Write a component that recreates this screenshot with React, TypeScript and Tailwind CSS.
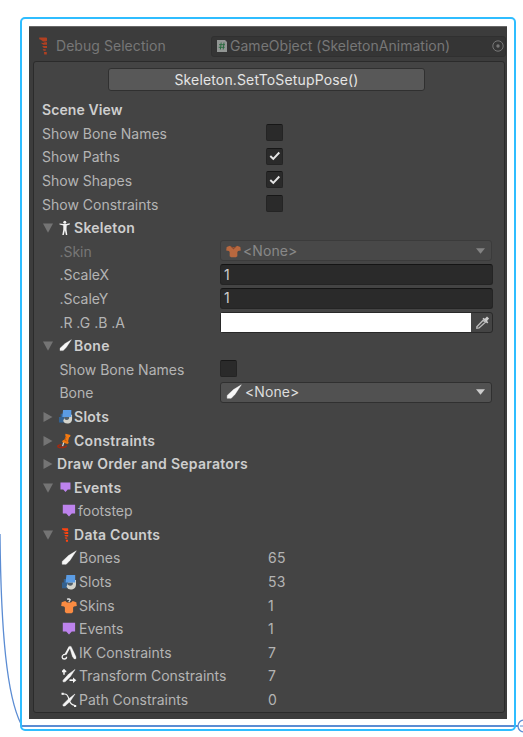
import React from "react";

type IconName =
  | "skeleton" | "bone" | "slot" | "pin" | "event" | "spine" | "skin" | "shirt" | "ik" | "transform" | "path";

function Icon({ name, className = "h-4 w-4" }: { name: IconName; className?: string }) {
  return (
    <svg viewBox="0 0 16 16" className={`shrink-0 ${className}`} aria-hidden="true">
      {name === "skeleton" && (
        <g fill="#f2f2f2">
          <circle cx="7.8" cy="2.2" r="1.5" />
          <path d="M2.500 3.500 6.500 4h2.600l3.700-.7v1.100L9.700 5.400l-.2 3.800.8 5.800H8.900L7.900 10.200 6.800 15H5.300l1-5.500V5.400l-3.800-.8Z" />
        </g>
      )}
      {name === "bone" && (
        <path d="M15.300.8 7.500 5.600 1.200 11.400v2.900h4l3.900-4.100Z" fill="#f7f7f7" stroke="#f7f7f7" strokeWidth=".4" strokeLinejoin="round" />
      )}
      {name === "slot" && (
        <g>
          <path d="M2.800 5H8v9.300H1V8.500h1.800Z" fill="#34618f" />
          <path d="M8 6h7v4.500a5 5 0 0 1-9.500 2.200Z" fill="#d4d4cc" />
          <path d="M6.500 8.500H12c0 2.300-1 3.200-2.700 3.200-1.800 0-2.800-1.100-2.800-3.200Z" fill="#52606b" />
          <path d="M5.400 1h8.800v7.600h-9.600Z" fill="#5b9ce4" />
        </g>
      )}
      {name === "pin" && (
        <g>
          <path d="M4.500 11.800c-5 .2-4.500 2.700-.5 2.700 3.500 0 5.700-.8 5.300-1.900" fill="none" stroke="#a12a12" strokeWidth="1.500" />
          <path d="m7 8.500-1.400 4.700" stroke="#ddd" strokeWidth="1.200" />
          <path d="m8.600.7 4.900 1.200-.5 2-.9.4-1 4 .7 1.600-1.500 1L5 9l.9-1.700 1.500-.6 1.400-3.600-.7-.8Z" fill="#f27a12" />
          <path d="m9.200 3.800-1.300 3.500 2.300.8" stroke="#c45307" strokeWidth=".8" fill="none" />
        </g>
      )}
      {name === "event" && <path d="M1.800 1.700h12.300v8.800h-3.300L8 13.500l-2.800-3H1.800Z" fill="#bd83ed" />}
      {name === "spine" && (
        <path d="M1 1.200h5.700l.5.6v1.900l-.7.600H4L2.200 3 1 2.600ZM2.200 5.300l2 .2L5.300 5h1.900v1.900H4.200ZM3.300 8h3.900v1.500H4.600ZM3.700 10.500h2.500v1.300H4.500ZM4.800 12.800H7v1.900H5Z" fill="#ff4310" />
      )}
      {(name === "skin" || name === "shirt") && (
        <g>
          <path d="m4.300 3 1.700 1.500h4L11.700 3l3.600 1.300.5 3.700-2.900.4-.8 1.100V14l-1.500 1.200H5.400L3.900 14V9.500l-.8-1.100L.2 8l.5-3.700Z" fill={name === "shirt" ? "#b8683f" : "#fa8b42"} />
          {name === "skin" && <path d="M6 1.200 8 .8l1.200.7-.3 1L7.700 4" fill="none" stroke="#eee" strokeWidth="1.200" />}
          {name === "shirt" && <path d="M4.500 3.200 8 7l3.500-3.800-1.800.7L8 5l-1.700-1.100Z" fill="#87482d" />}
        </g>
      )}
      {name === "ik" && (
        <g fill="none" stroke="#f5f5f5">
          <path d="M8.600 2 4.500 9.500" strokeWidth="1.900" />
          <path d="m8.300 1.200 1.800.2 4.900 10.400v2l-1.800.2-1.800-2.500Z" fill="#f5f5f5" strokeWidth=".3" />
          <path d="M4.700 9.300 2.500 9.700C.3 11 .9 14 3.200 14c1.600 0 2.400-.8 2.400-2.200" strokeWidth="1.300" />
        </g>
      )}
      {name === "transform" && (
        <g stroke="#f5f5f5" fill="#f5f5f5">
          <path d="M14 1.500 7.500 6.300 2 12.300v1.500h2L9.200 8.800Z" strokeWidth=".5" />
          <path d="M3 2v4.700M1 3.400h4.300" strokeWidth="1.500" />
          <path d="m1 3 2-2.200L5 3Z" stroke="none" />
          <path d="M8.500 12.200h5" strokeWidth="1.600" />
          <path d="m12 9.500 3.300 2.700-3.300 2.700Z" stroke="none" />
        </g>
      )}
      {name === "path" && (
        <g stroke="#f5f5f5" fill="none">
          <path d="M14 2 7.500 7 2 12.500V14h2L9.200 9.200Z" fill="#f5f5f5" strokeWidth=".5" />
          <path d="M1 2h2.500c4 0 3.800 4 5 7 .7 2 2 3.800 5.500 4.500" strokeWidth="1.200" />
          <path d="M.5 1.700h2.200M13 14h2.200" strokeWidth="1.900" />
        </g>
      )}
    </svg>
  );
}

function Row({ children, className = "" }: { children: React.ReactNode; className?: string }) {
  return <div className={`flex h-[23.6px] items-center whitespace-nowrap ${className}`}>{children}</div>;
}

function Checkbox({ checked = false }: { checked?: boolean }) {
  return (
    <span className="mb-[2px] flex h-[17px] w-[17px] items-center justify-center rounded-[2px] border border-[#242424] border-t-[#171717] bg-[#2a2a2a]">
      {checked && (
        <svg viewBox="0 0 12 12" className="h-3 w-3"><path d="m1.300 6 3 3 6-6.500" fill="none" stroke="#e5e5e5" strokeWidth="1.900" /></svg>
      )}
    </span>
  );
}

function SceneToggle({ label, checked }: { label: string; checked?: boolean }) {
  return <Row className="pl-2"><span className="w-[224px]">{label}</span><Checkbox checked={checked} /></Row>;
}

function Foldout({ label, icon, open = false, iconClass }: { label: string; icon?: IconName; open?: boolean; iconClass?: string }) {
  return (
    <Row className="pl-[9px] font-semibold tracking-[0.27px] text-[#cecece]">
      <svg viewBox="0 0 10 10" className="mr-[4px] h-[10px] w-[10px] shrink-0">
        <path d={open ? "M0 .5h10L5 9.800Z" : "M.5 0v10l9-5Z"} fill="#747474" />
      </svg>
      {icon && <span className="mr-[1px] flex w-4 items-center"><Icon name={icon} className={iconClass} /></span>}
      <span>{label}</span>
    </Row>
  );
}

function Property({ label, dim = false, children }: { label: string; dim?: boolean; children: React.ReactNode }) {
  return (
    <Row className="pl-[25.4px]">
      <span className={`w-[160.6px] shrink-0 ${dim ? "text-[#777777]" : ""}`}>{label}</span>
      {children}
    </Row>
  );
}

function Select({ icon, dim = false }: { icon: IconName; dim?: boolean }) {
  return (
    <div className={`mb-[2px] flex h-[21px] w-[272px] items-center rounded-[3px] border pl-[5px] pr-[6px] ${dim ? "border-[#3b3b3b] bg-[#484848] text-[#888888]" : "border-[#303030] bg-[#515151] text-[#dddddd]"}`}>
      <Icon name={icon} className={dim ? "mr-[2px] h-[15px] w-[15px]" : "mr-[3px] h-4 w-4"} />
      <span className="tracking-[0.1px]">&lt;None&gt;</span>
      <svg viewBox="0 0 10 6" className="ml-auto h-[6px] w-[9px]"><path d="M0 0h10L5 6Z" fill={dim ? "#838383" : "#cccccc"} /></svg>
    </div>
  );
}

function NumberField() {
  return <div className="mb-px flex h-[21px] w-[273px] items-center rounded-[3px] border border-[#242424] border-t-[#141414] bg-[#2a2a2a] pl-[3px] text-[#cfcfcf]">1</div>;
}

const counts: { icon: IconName; label: string; value: number }[] = [
  { icon: "bone", label: "Bones", value: 65 },
  { icon: "slot", label: "Slots", value: 53 },
  { icon: "skin", label: "Skins", value: 1 },
  { icon: "event", label: "Events", value: 1 },
  { icon: "ik", label: "IK Constraints", value: 7 },
  { icon: "transform", label: "Transform Constraints", value: 7 },
  { icon: "path", label: "Path Constraints", value: 0 },
];

export default function App() {
  return (
    <main className="relative h-[737px] w-[523px] overflow-hidden bg-white pl-5 pt-[17px] font-['Inter',sans-serif] text-[14px] leading-5 tracking-[0.001px] text-[#b4b4b4]">
      <svg viewBox="0 0 523 737" className="absolute inset-0 h-[737px] w-[523px]" fill="none" stroke="#5b8cd3">
        <path d="M0 534C1 634 7 696 21 724" strokeWidth="1.300" />
        <path d="M21 726h497" strokeWidth="2" />
        <circle cx="524" cy="726" r="6" strokeWidth="1.300" />
        <path d="M520 726h3" />
      </svg>
      <div className="relative h-[714px] w-[496px] rounded-[5px] border-2 border-[#2fbdff] pl-[7px] pt-[7px]">
        <section className="h-[693px] w-[478px] border-t border-[#686868] bg-[#3c3c3c]">
          <header className="flex h-[34px] items-center pl-[9px] pt-[4px] text-[#777777]">
            <Icon name="spine" className="mr-[-2px] h-5 w-5 opacity-60" />
            <span className="w-[155px] tracking-[0.05px]">Debug Selection</span>
            <div className="flex h-[21px] w-[295px] items-center rounded-[3px] border border-[#303030] bg-[#353535] pl-[5px]">
              <svg viewBox="0 0 10 12" className="mr-[3px] h-3 w-[10px]">
                <path d="M0 0h8l2 2v10H0Z" fill="#929694" />
                <path d="m4.200 2.500-.8 7M7 2.500l-.8 7M2 4.700h6M1.700 7.300h6" stroke="#24683a" strokeWidth=".9" />
              </svg>
              <span className="tracking-[0.02px]">GameObject (SkeletonAnimation)</span>
              <svg viewBox="0 0 12 12" className="ml-auto mr-px h-3 w-3"><circle cx="6" cy="6" r="5.200" fill="none" stroke="#777777" /><circle cx="6" cy="6" r="1.700" fill="#777777" /></svg>
            </div>
          </header>
          <div className="ml-1 h-[652px] w-[472px] rounded-[3px] border border-[#2b2b2b] bg-[#444444] pt-[6px]">
            <button className="ml-[74px] block h-[23px] w-[317px] rounded-[3px] border border-[#303030] bg-[#585858] leading-[22px] tracking-[0.15px] text-[#e5e5e5]">Skeleton.SetToSetupPose()</button>
            <div className="pt-[7.4px]">
              <Row className="pl-2 font-semibold tracking-[0.1px] text-[#cecece]">Scene View</Row>
              <SceneToggle label="Show Bone Names" />
              <SceneToggle label="Show Paths" checked />
              <SceneToggle label="Show Shapes" checked />
              <SceneToggle label="Show Constraints" />
              <Foldout label="Skeleton" icon="skeleton" open />
              <Property label=".Skin" dim><Select icon="shirt" dim /></Property>
              <Property label=".ScaleX"><NumberField /></Property>
              <Property label=".ScaleY"><NumberField /></Property>
              <Property label=".R .G .B .A">
                <div className="mb-px flex h-[21px] w-[273px] rounded-[3px] border border-[#292929] bg-[#444444]">
                  <div className="h-[19px] w-[250px] bg-white" />
                  <svg viewBox="0 0 16 16" className="ml-1 mt-[2px] h-[15px] w-[15px]" fill="none">
                    <path d="m2 12.500 6.700-7 2.300 2.300-6.700 6L2 14Z" stroke="#b9b9b9" strokeWidth="1.500" />
                    <path d="m8 4 5 5 1.200-1.200-1.400-1.500L15 3.700 12.800 1.600 10.500 4 9.200 2.800Z" fill="#cccccc" />
                  </svg>
                </div>
              </Property>
              <Foldout label="Bone" icon="bone" open iconClass="ml-[2px] mb-[2px] h-[13px] w-[13px]" />
              <Property label="Show Bone Names"><Checkbox /></Property>
              <Property label="Bone"><Select icon="bone" /></Property>
              <Foldout label="Slots" icon="slot" iconClass="ml-px h-[15px] w-[15px]" />
              <Foldout label="Constraints" icon="pin" />
              <Foldout label="Draw Order and Separators" />
              <Foldout label="Events" icon="event" open iconClass="ml-[2px] h-[13px] w-[13px]" />
              <Row className="pl-[27px]"><Icon name="event" className="mr-px h-4 w-4" /><span>footstep</span></Row>
              <Foldout label="Data Counts" icon="spine" open iconClass="ml-[4px] h-4 w-4" />
              {counts.map(({ icon, label, value }) => (
                <Row key={label} className="pl-[27px]">
                  <Icon name={icon} className="mr-[2px] h-4 w-4" /><span className="w-[189px]">{label}</span><span className="tracking-[0.2px]">{value}</span>
                </Row>
              ))}
            </div>
          </div>
        </section>
      </div>
    </main>
  );
}
